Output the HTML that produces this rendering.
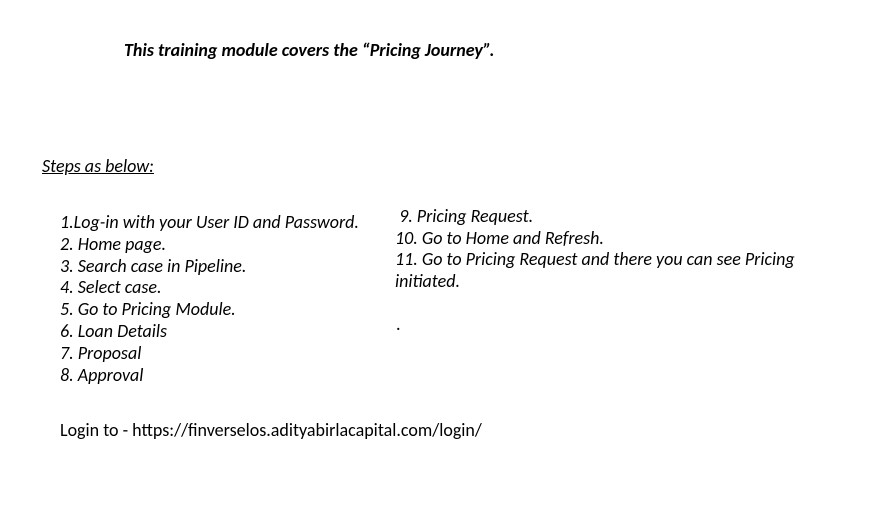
<!DOCTYPE html>
<html><head><meta charset="utf-8"><style>
body{margin:0;width:879px;height:525px;background:#fff;font-family:Carlito,"Liberation Sans",sans-serif;color:#000;position:relative;overflow:hidden}
.t{position:absolute;white-space:nowrap;font-size:18px;line-height:22px}
</style></head><body>
<div class="t" style="left:124px;top:39px;font-weight:bold;font-style:italic">This training module covers the “Pricing Journey”.</div>
<div class="t" style="left:42px;top:155px;font-style:italic;text-decoration:underline">Steps as below:</div>
<div class="t" style="left:60px;top:212px;font-style:italic;line-height:21.8px">
1.Log-in with your User ID and Password.<br>2. Home page.<br>3. Search case in Pipeline.<br>4. Select case.<br>5. Go to Pricing Module.<br>6. Loan Details<br>7. Proposal<br>8. Approval</div>
<div class="t" style="left:395px;top:206px;font-style:italic;line-height:21.7px">
&nbsp;9. Pricing Request.<br>10. Go to Home and Refresh.<br>11. Go to Pricing Request and there you can see Pricing<br>initiated.</div>
<div class="t" style="left:396px;top:313px">.</div>
<div class="t" style="left:60px;top:419px">Login to - https://finverselos.adityabirlacapital.com/login/</div>
</body></html>
